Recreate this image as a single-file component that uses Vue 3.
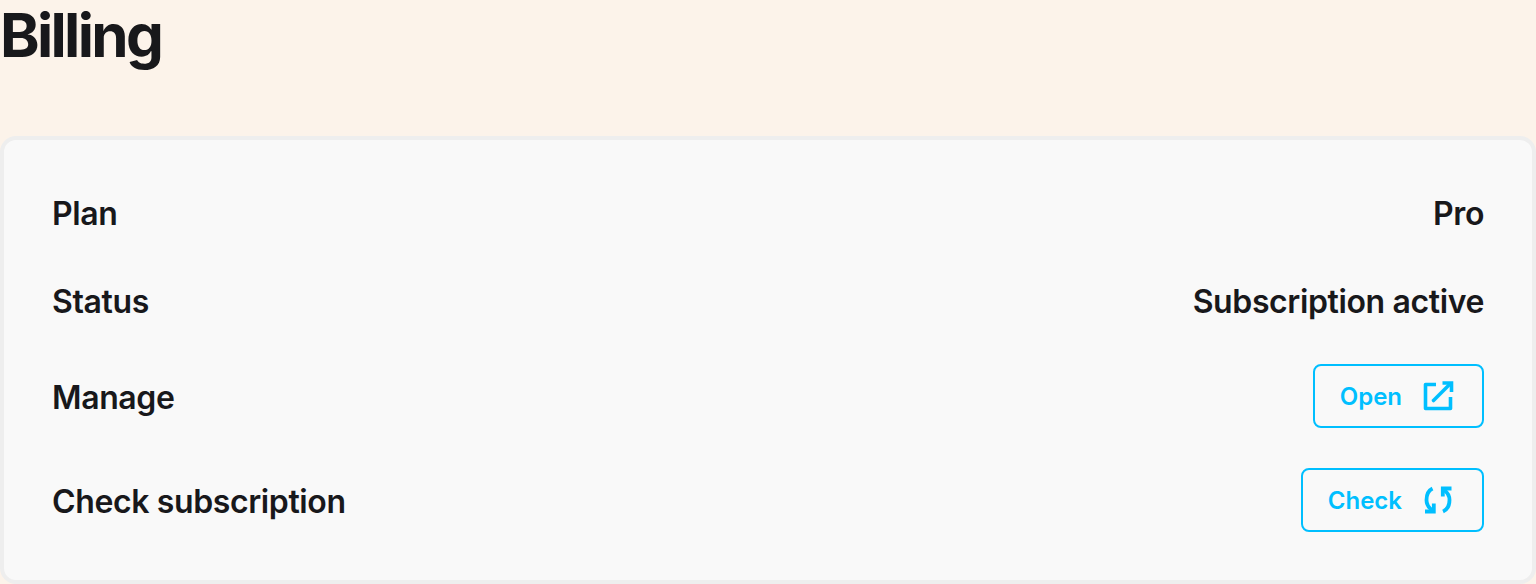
<script setup>
const rows = [
  { label: 'Plan', value: 'Pro' },
  { label: 'Status', value: 'Subscription active' },
  { label: 'Manage', action: 'Open', icon: 'open' },
  { label: 'Check subscription', action: 'Check', icon: 'sync' },
]
</script>

<template>
  <main class="page">
    <h1 class="title">Billing</h1>
    <section class="card">
      <div v-for="row in rows" :key="row.label" class="row">
        <span class="text">{{ row.label }}</span>
        <span v-if="row.value" class="text">{{ row.value }}</span>
        <button v-else class="btn" type="button">
          <span>{{ row.action }}</span>
          <svg v-if="row.icon === 'open'" class="icon" viewBox="0 0 32 32" fill="none" stroke="currentColor" stroke-width="3.6">
            <path d="M14 4.500H3.500V28.500H28.500V17" stroke-linejoin="round" />
            <path d="M11.500 20.500 28 4" stroke-linecap="round" />
            <path d="M20.500 3H29.500V12" />
          </svg>
          <svg v-else class="icon" viewBox="0 0 32 32" fill="none" stroke="currentColor" stroke-width="3.8">
            <path d="M10.500 4.500C6.500 6.500 4.500 11 4.500 16C4.500 20 6.500 23.500 10 26" />
            <path d="M3 27.500H11.800V19.500" />
            <path d="M21 27.500C25.500 25.500 27.500 21 27.500 16C27.500 12 25.500 8.500 22 6" />
            <path d="M29.500 4.500H20.800V12.500" />
          </svg>
        </button>
      </div>
    </section>
  </main>
</template>

<style>
html, body { margin: 0; background: #fcf3ea; }
</style>

<style scoped>
.page {
  height: 584px;
  background: #fcf3ea;
  font-family: Inter, "Liberation Sans", sans-serif;
  color: #18181b;
  display: flex;
  flex-direction: column;
}
.title {
  margin: 0 0 66px;
  font-size: 60px;
  line-height: 70px;
  font-weight: 700;
  letter-spacing: -2.7px;
}
.card {
  flex: 1;
  box-sizing: border-box;
  background: #f9f9f9;
  border: 4px solid #eeeeee;
  border-radius: 16px;
  padding: 48px;
  display: flex;
  flex-direction: column;
  gap: 40px;
}
.row {
  display: flex;
  justify-content: space-between;
  align-items: center;
  min-height: 48px;
}
.text {
  padding-top: 3px;
  font-size: 32px;
  line-height: 45px;
  font-weight: 600;
  letter-spacing: -0.38px;
}
.btn {
  height: 64px;
  box-sizing: border-box;
  display: flex;
  align-items: center;
  gap: 20px;
  padding: 0 28px 0 25px;
  background: transparent;
  border: 2px solid #00bfff;
  border-radius: 8px;
  color: #00bfff;
  font-family: inherit;
  font-size: 24px;
  font-weight: 600;
}
.icon { width: 32px; height: 32px; }
</style>
